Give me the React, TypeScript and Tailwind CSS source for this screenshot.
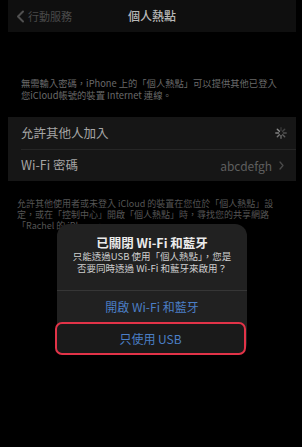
import React from 'react';

const font = { fontFamily: '"Noto Sans CJK TC", "Noto Sans", sans-serif' };

const Spinner: React.FC = () => (
  <svg width="14" height="14" viewBox="0 0 24 24">
    {Array.from({ length: 8 }).map((_, i) => (
      <line
        key={i}
        x1="12"
        y1="3"
        x2="12"
        y2="8"
        stroke="#9a9a9a"
        strokeWidth="2.4"
        strokeLinecap="round"
        opacity={0.25 + (i / 8) * 0.75}
        transform={`rotate(${i * 45} 12 12)`}
      />
    ))}
  </svg>
);

const App: React.FC = () => {
  return (
    <div className="relative h-[447px] w-full overflow-hidden bg-black" style={font}>
      {/* Nav bar */}
      <div className="ml-2 mr-[6px] grid h-8 grid-cols-[1fr_auto_1fr] items-center bg-[#0f0f0f]">
        <div className="flex items-center gap-[3px] pl-2">
          <svg width="9" height="13" viewBox="0 0 9 13">
            <path d="M7 1.5 L2 6.5 L7 11.5" fill="none" stroke="#505050" strokeWidth="2" strokeLinecap="round" strokeLinejoin="round" />
          </svg>
          <span className="text-[11px] leading-none text-[#4a4a4a]">行動服務</span>
        </div>
        <div className="text-[12px] font-medium leading-none text-[#b8b8b8]">個人熱點</div>
        <div />
      </div>

      {/* Footer text 1 */}
      <div className="mt-[46px] px-[21px] text-[9.3px] leading-[11.5px] text-[#6a6a6a]">
        無需輸入密碼，iPhone 上的「個人熱點」可以提供其他已登入
        <br />
        您iCloud帳號的裝置 Internet 連線。
      </div>

      {/* Group */}
      <div className="ml-2 mr-[6px] mt-[16px] bg-[#161616]">
        <div className="flex h-8 items-center justify-between pl-[13px] pr-[8px]">
          <span className="text-[12.5px] text-[#a5a5a5]">允許其他人加入</span>
          <Spinner />
        </div>
        <div className="ml-[13px] h-px bg-[#262626]" />
        <div className="flex h-[31px] items-center justify-between pl-[13px] pr-[12px]">
          <span className="text-[12.5px] text-[#a5a5a5]">Wi-Fi 密碼</span>
          <div className="flex items-center gap-[7px]">
            <span className="text-[12px] text-[#5e5e5e]">abcdefgh</span>
            <svg width="5" height="9" viewBox="0 0 5 9">
              <path d="M1 1 L4 4.5 L1 8" fill="none" stroke="#4a4a4a" strokeWidth="1.3" strokeLinecap="round" strokeLinejoin="round" />
            </svg>
          </div>
        </div>
      </div>

      {/* Footer text 2 */}
      <div className="mt-[17px] px-[17px] text-[9px] leading-[11px] text-[#555]">
        允許其他使用者或未登入 iCloud 的裝置在您位於「個人熱點」設
        <br />
        定，或在「控制中心」開啟「個人熱點」時，尋找您的共享網路
        <br />
        「Rachel 的 iPhone」。
      </div>

      {/* Alert */}
      <div className="absolute left-[57px] top-[224px] w-[190px] rounded-[12px] bg-[#212121]">
        <div className="px-3 pb-[16px] pt-[10px] text-center">
          <div className="text-[12.5px] font-semibold leading-[17px] text-[#ebebeb]">已關閉 Wi-Fi 和藍牙</div>
          <div className="text-[9.5px] leading-[11.5px] text-[#cfcfcf]">
            只能透過USB 使用「個人熱點」，您是
            <br />
            否要同時透過 Wi-Fi 和藍牙來啟用？
          </div>
        </div>
        <div className="h-px bg-[#363636]" />
        <div className="flex h-[31px] items-center justify-center text-[12px] text-[#4b7fc6]">開啟 Wi-Fi 和藍牙</div>
        <div className="-ml-[2px] mr-[1px] flex h-[33px] items-center justify-center rounded-[7px] border-2 border-[#e23348] bg-[#1a1a1a] text-[12px] text-[#4b7fc6]">
          只使用 USB
        </div>
      </div>
    </div>
  );
};

export default App;
